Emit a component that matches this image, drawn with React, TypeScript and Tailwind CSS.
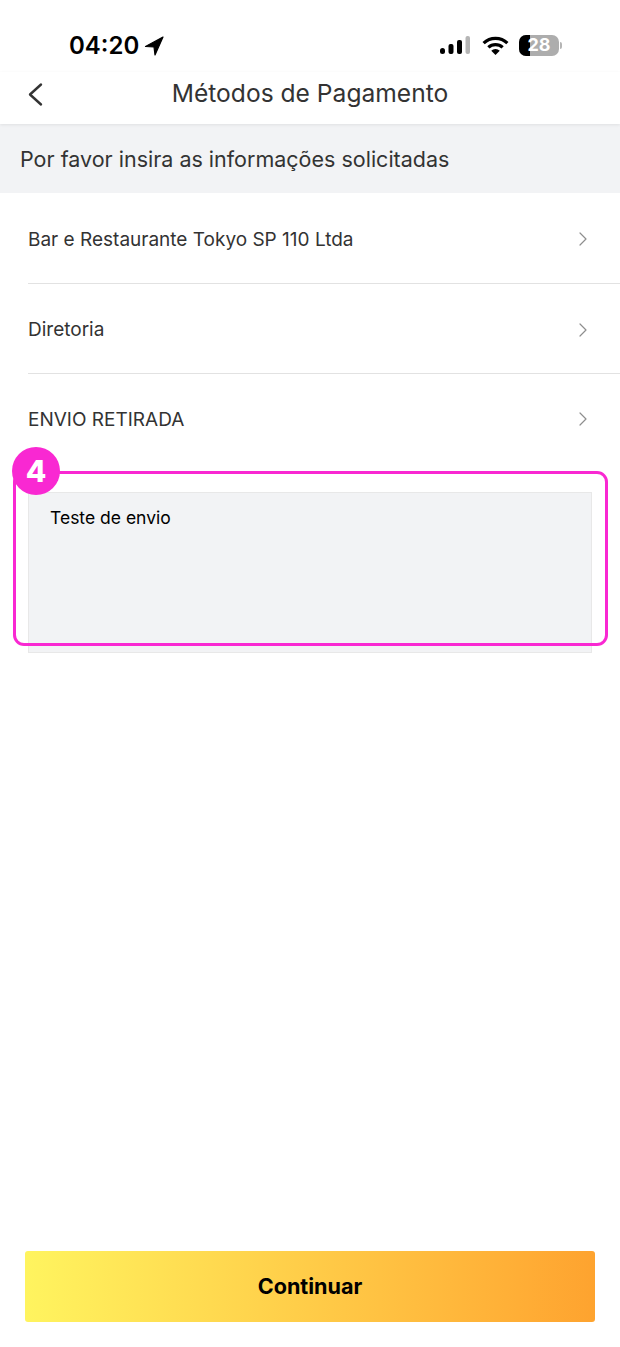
import React from "react";

const font = { fontFamily: '"Inter", "Noto Sans", sans-serif' };

function Chevron() {
  return (
    <svg className="-mt-[2px]" width="8" height="14" viewBox="0 0 8 14" fill="none" stroke="#8e8e8e" strokeWidth="1.2" strokeLinecap="round" strokeLinejoin="round">
      <path d="M1 1l6 6-6 6" />
    </svg>
  );
}

function Row({ label, border, first }: { label: string; border?: boolean; first?: boolean }) {
  return (
    <div className="pl-7">
      <div className={`${first ? "h-[91px]" : "h-[90px]"} flex items-center justify-between pr-[33px] ${border ? "pt-[4px] border-b border-[#e2e2e2]" : "pt-[2px]"}`}>
        <span className="text-[19px] text-[#333333]">{label}</span>
        <Chevron />
      </div>
    </div>
  );
}

export default function App() {
  return (
    <div className="relative w-[620px] h-[1347px] bg-white overflow-hidden flex flex-col" style={font}>
      <div className="h-[72px] flex items-start justify-between pt-[30px] pl-[69px] pr-[58px] shrink-0">
        <div className="flex items-center gap-[5px]">
          <span className="text-[24px] leading-[32px] font-semibold text-black">04:20</span>
          <svg width="20" height="20" viewBox="0 0 20 20"><path d="M19 1 1.500 10.500l8.500.5 1 8z" fill="#000" stroke="#000" strokeWidth="1.200" strokeLinejoin="round" /></svg>
        </div>
        <div className="flex items-center gap-[7px] h-[32px] -mt-[1px]">
          <svg className="mr-[1px]" width="30" height="19" viewBox="0 0 30 19">
            <rect x="0" y="12" width="5" height="6" rx="2.500" fill="#000" />
            <rect x="8.500" y="8" width="5" height="10" rx="2" fill="#000" />
            <rect x="17" y="4" width="5" height="14" rx="2" fill="#000" />
            <rect x="25.500" y="0" width="4.500" height="18" rx="2" fill="#b5b5b5" />
          </svg>
          <svg className="ml-[4px]" width="27" height="19" viewBox="0 0 28 20" fill="none" stroke="#000" strokeWidth="3.400">
            <path d="M1.500 7.500a18 18 0 0 1 25 0" />
            <path d="M6.500 12a11 11 0 0 1 15 0" />
            <path d="M14 20 9.500 15.500a6.500 6.500 0 0 1 9 0z" fill="#000" stroke="none" />
          </svg>
          <div className="ml-[3px] relative w-[40px] h-[21px] rounded-[7px] bg-[#adadad] overflow-hidden">
            <div className="absolute left-0 top-0 h-full w-[11px] bg-black" />
            <span className="absolute inset-0 flex items-center justify-center text-[18px] leading-none font-bold text-white">28</span>
          </div>
          <div className="-ml-[6px] w-[2px] h-[7px] rounded-r bg-[#b5b5b5]" />
        </div>
      </div>

      <div className="h-[52px] relative flex items-center justify-center shrink-0 shadow-[0_1px_3px_rgba(0,0,0,0.08)]">
        <svg className="absolute left-[27px] top-[10px]" width="18" height="26" viewBox="0 0 18 26" fill="none" stroke="#333" strokeWidth="2.400" strokeLinecap="round" strokeLinejoin="round">
          <path d="M14 2.500 3 12.500l11 10" />
        </svg>
        <span className="text-[24.600px] text-[#333333] -mt-[10px]">Métodos de Pagamento</span>
      </div>

      <div className="h-[69px] bg-[#f2f3f5] flex items-center pl-5 pt-[2px] shrink-0">
        <span className="text-[21.500px] text-[#333333]">Por favor insira as informações solicitadas</span>
      </div>

      <Row label="Bar e Restaurante Tokyo SP 110 Ltda" border first />
      <Row label="Diretoria" border />
      <Row label="ENVIO RETIRADA" />

      <div className="mt-[28px] mx-[28px] h-[161px] bg-[#f2f3f5] border border-[#e8e8e8] pl-[21px] pt-[12px]">
        <span className="text-[17.500px] text-black">Teste de envio</span>
      </div>

      <div className="mt-auto mb-[25px] mx-[25px] h-[71px] rounded-[3px] flex items-center justify-center bg-gradient-to-r from-[#fff45f] to-[#fea32f]">
        <span className="text-[21.600px] font-bold text-black">Continuar</span>
      </div>

      <div className="absolute left-[13px] top-[471px] w-[595px] h-[175px] rounded-[11px] border-[3px] border-[#f928d2]" />
      <div className="absolute left-[12px] top-[447px] w-[48px] h-[48px] rounded-full bg-[#f928d2] flex items-center justify-center">
        <span className="text-[30px] font-extrabold text-white leading-none">4</span>
      </div>
    </div>
  );
}
